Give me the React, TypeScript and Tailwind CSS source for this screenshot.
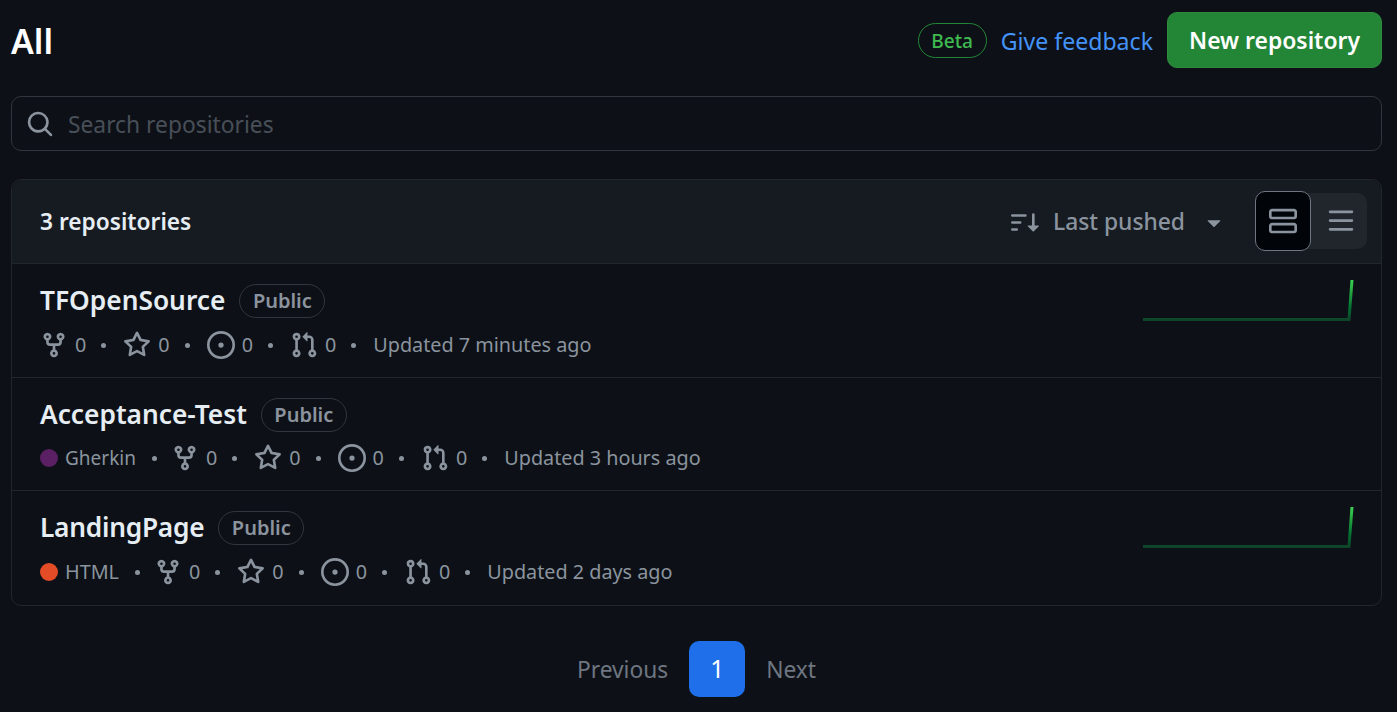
import React from 'react';

type IconProps = { d: string; className?: string };

const Icon: React.FC<IconProps> = ({ d, className }) => (
  <svg viewBox="0 0 16 16" fill="currentColor" className={className}>
    <path d={d} />
  </svg>
);

const FORK = 'M5 5.372v.878c0 .414.336.75.75.75h4.5a.75.75 0 0 0 .75-.75v-.878a2.25 2.25 0 1 1 1.5 0v.878a2.25 2.25 0 0 1-2.25 2.25h-1.5v2.128a2.251 2.251 0 1 1-1.5 0V8.5h-1.5A2.25 2.25 0 0 1 3.5 6.25v-.878a2.25 2.25 0 1 1 1.5 0ZM5 3.25a.75.75 0 1 0-1.5 0 .75.75 0 0 0 1.5 0Zm6.75.75a.75.75 0 1 0 0-1.5.75.75 0 0 0 0 1.5Zm-3 8.75a.75.75 0 1 0-1.5 0 .75.75 0 0 0 1.5 0Z';
const STAR = 'M8 .25a.75.75 0 0 1 .673.418l1.882 3.815 4.21.612a.75.75 0 0 1 .416 1.279l-3.046 2.97.719 4.192a.751.751 0 0 1-1.088.791L8 12.347l-3.766 1.98a.75.75 0 0 1-1.088-.79l.72-4.194L.818 6.374a.75.75 0 0 1 .416-1.28l4.21-.611L7.327.668A.75.75 0 0 1 8 .25Zm0 2.445L6.615 5.5a.75.75 0 0 1-.564.41l-3.097.45 2.24 2.184a.75.75 0 0 1 .216.664l-.528 3.084 2.769-1.456a.75.75 0 0 1 .698 0l2.77 1.456-.53-3.084a.75.75 0 0 1 .216-.664l2.24-2.183-3.096-.45a.75.75 0 0 1-.564-.41L8 2.694Z';
const ISSUE = 'M8 9.5a1.5 1.5 0 1 0 0-3 1.5 1.5 0 0 0 0 3ZM8 0a8 8 0 1 1 0 16A8 8 0 0 1 8 0ZM1.5 8a6.5 6.5 0 1 0 13 0 6.5 6.5 0 0 0-13 0Z';
const PULL = 'M1.5 3.25a2.25 2.25 0 1 1 3 2.122v5.256a2.251 2.251 0 1 1-1.5 0V5.372A2.25 2.25 0 0 1 1.5 3.25Zm5.677-.177L9.573.677A.25.25 0 0 1 10 .854V2.5h1A2.5 2.5 0 0 1 13.5 5v5.628a2.251 2.251 0 1 1-1.5 0V5a1 1 0 0 0-1-1h-1v1.646a.25.25 0 0 1-.427.177L7.177 3.427a.25.25 0 0 1 0-.354ZM3.75 2.5a.75.75 0 1 0 0 1.5.75.75 0 0 0 0-1.5Zm0 9.5a.75.75 0 1 0 0 1.5.75.75 0 0 0 0-1.5Zm8.25.75a.75.75 0 1 0 1.5 0 .75.75 0 0 0-1.5 0Z';
const SEARCH = 'M10.68 11.74a6 6 0 0 1-7.922-8.982 6 6 0 0 1 8.982 7.922l3.04 3.04a.749.749 0 0 1-.326 1.275.749.749 0 0 1-.734-.215ZM11.5 7a4.499 4.499 0 1 0-8.997 0A4.499 4.499 0 0 0 11.5 7Z';
const SORT = 'M0 4.25a.75.75 0 0 1 .75-.75h7.5a.75.75 0 0 1 0 1.5h-7.5A.75.75 0 0 1 0 4.25Zm0 4a.75.75 0 0 1 .75-.75h4.5a.75.75 0 0 1 0 1.5h-4.5A.75.75 0 0 1 0 8.25Zm0 4a.75.75 0 0 1 .75-.75h2.5a.75.75 0 0 1 0 1.5h-2.5a.75.75 0 0 1-.75-.75ZM13.5 10h2.25a.25.25 0 0 1 .177.427l-3 3a.25.25 0 0 1-.354 0l-3-3A.25.25 0 0 1 9.75 10H12V3.75a.75.75 0 0 1 1.5 0V10Z';
const ROWS = 'M16 10.75v2.5A1.75 1.75 0 0 1 14.25 15H1.75A1.75 1.75 0 0 1 0 13.25v-2.5C0 9.784.784 9 1.75 9h12.5c.966 0 1.75.784 1.75 1.75Zm0-8v2.5A1.75 1.75 0 0 1 14.25 7H1.75A1.75 1.75 0 0 1 0 5.25v-2.5C0 1.784.784 1 1.75 1h12.5c.966 0 1.75.784 1.75 1.75Zm-1.75-.25H1.75a.25.25 0 0 0-.25.25v2.5c0 .138.112.25.25.25h12.5a.25.25 0 0 0 .25-.25v-2.5a.25.25 0 0 0-.25-.25Zm0 8H1.75a.25.25 0 0 0-.25.25v2.5c0 .138.112.25.25.25h12.5a.25.25 0 0 0 .25-.25v-2.5a.25.25 0 0 0-.25-.25Z';
const BARS = 'M1 2.75A.75.75 0 0 1 1.75 2h12.5a.75.75 0 0 1 0 1.5H1.75A.75.75 0 0 1 1 2.75Zm0 5A.75.75 0 0 1 1.75 7h12.5a.75.75 0 0 1 0 1.5H1.75A.75.75 0 0 1 1 7.75ZM1.75 12h12.5a.75.75 0 0 1 0 1.5H1.75a.75.75 0 0 1 0-1.5Z';
const CARET = 'm4.427 7.427 3.396 3.396a.25.25 0 0 0 .354 0l3.396-3.396A.25.25 0 0 0 11.396 7H4.604a.25.25 0 0 0-.177.427Z';

const Dot = () => <span className="ml-[15px] mr-[17px] h-[5px] w-[5px] rounded-full bg-[#8b949e]" />;

const Stat: React.FC<{ d: string }> = ({ d }) => (
  <span className="flex items-center">
    <Icon d={d} className="h-[28px] w-[28px]" />
    <span className="ml-[7px]">0</span>
  </span>
);

const Sparkline: React.FC<{ id: string }> = ({ id }) => (
  <svg width="212" height="44" viewBox="0 0 212 44" fill="none" className="shrink-0">
    <defs>
      <linearGradient id={id} gradientUnits="userSpaceOnUse" x1="0" y1="42" x2="0" y2="2">
        <stop offset="0" stopColor="#0e4429" />
        <stop offset="0.3" stopColor="#006d32" />
        <stop offset="0.7" stopColor="#26a641" />
        <stop offset="1" stopColor="#39d353" />
      </linearGradient>
    </defs>
    <path d="M1 41.5 L207 41.5 L210 2" stroke={`url(#${id})`} strokeWidth="3" />
  </svg>
);

type Repo = {
  name: string;
  nameClass: string;
  lang?: { label: string; color: string; labelClass: string };
  updated: string;
  spark?: boolean;
  rowClass: string;
  metaClass: string;
};

const repos: Repo[] = [
  { name: 'TFOpenSource', nameClass: '', updated: 'Updated 7 minutes ago', spark: true, rowClass: 'h-[114px]', metaClass: 'mt-[10px]' },
  { name: 'Acceptance-Test', nameClass: '', lang: { label: 'Gherkin', color: 'bg-[#5b2063]', labelClass: 'text-[19px]' }, updated: 'Updated 3 hours ago', rowClass: 'h-[113px]', metaClass: 'mt-[9px]' },
  { name: 'LandingPage', nameClass: 'tracking-[-0.25px]', lang: { label: 'HTML', color: 'bg-[#e34c26]', labelClass: '' }, updated: 'Updated 2 days ago', spark: true, rowClass: 'h-[115px]', metaClass: 'mt-[10px]' },
];

const RepoRow: React.FC<{ repo: Repo; index: number }> = ({ repo, index }) => (
  <div className={`${repo.rowClass} flex items-start justify-between border-t border-[#21262d] pl-[28px] pr-[27px]`}>
    <div className="flex flex-col">
      <div className="mt-[20px] flex h-[34px] items-center">
        <span className={`text-[26.3px] font-semibold text-[#e6edf3] ${repo.nameClass}`}>{repo.name}</span>
        <span className="ml-[14px] flex h-[34px] items-center rounded-full border border-[#30363d] px-[12.5px] text-[20px] font-semibold text-[#8b949e]">Public</span>
      </div>
      <div className={`${repo.metaClass} flex h-[34px] items-center text-[19.8px] text-[#8b949e]`}>
        {repo.lang && (
          <>
            <span className={`mr-[7px] h-[18px] w-[18px] rounded-full ${repo.lang.color}`} />
            <span className={repo.lang.labelClass}>{repo.lang.label}</span>
            <span className="ml-[16px] mr-[14px] h-[5px] w-[5px] rounded-full bg-[#8b949e]" />
          </>
        )}
        <Stat d={FORK} />
        <Dot />
        <Stat d={STAR} />
        <Dot />
        <Stat d={ISSUE} />
        <Dot />
        <Stat d={PULL} />
        <Dot />
        <span>{repo.updated}</span>
      </div>
    </div>
    {repo.spark && (
      <div className="mt-[14px]">
        <Sparkline id={`spark-${index}`} />
      </div>
    )}
  </div>
);

const App: React.FC = () => {
  return (
    <div className="h-[712px] overflow-hidden bg-[#0d1117] pl-[11px] pr-[15px] pt-[12px] font-['Noto_Sans',sans-serif]">
      {/* title row */}
      <div className="flex h-[56px] items-center justify-between">
        <h1 className="pt-[3px] text-[34px] font-semibold text-white">All</h1>
        <div className="flex items-center">
          <span className="flex h-[35px] w-[69px] items-center justify-center rounded-full border border-[#238636] pt-[2px] text-[19.1px] font-medium text-[#3fb950]">Beta</span>
          <span className="ml-[14px] pt-[2px] text-[23.1px] text-[#4493f8]">Give feedback</span>
          <button className="ml-[14px] flex h-[56px] w-[215px] items-center justify-center rounded-[10px] border border-[#2f8a3e] bg-[#238636] pt-[3px] text-[22.9px] font-semibold text-white">New repository</button>
        </div>
      </div>

      {/* search */}
      <div className="mt-[28px] flex h-[55px] items-center rounded-[10px] border border-[#30363d] pl-[14px]">
        <Icon d={SEARCH} className="h-[28px] w-[28px] text-[#8b949e]" />
        <span className="ml-[14px] pt-[3px] text-[22.8px] text-[#484f58]">Search repositories</span>
      </div>

      {/* list */}
      <div className="mt-[28px] rounded-[10px] border border-[#21262d]">
        <div className="flex h-[83px] items-center justify-between rounded-t-[10px] bg-[#161b22] pl-[28px] pr-[14px]">
          <span className="pt-[2px] text-[22.7px] font-semibold text-[#e6edf3]">3 repositories</span>
          <div className="flex items-center">
            <div className="flex items-center text-[#8b949e]">
              <Icon d={SORT} className="h-[28px] w-[28px]" />
              <span className="ml-[14px] pt-[2px] text-[22.8px] font-medium">Last pushed</span>
              <Icon d={CARET} className="ml-[15px] h-[28px] w-[28px]" />
            </div>
            <div className="-mt-[2px] ml-[27px] flex h-[56px] w-[112px] items-center rounded-[10px] bg-[#21262d]">
              <span className="flex h-[60px] w-[56px] items-center justify-center rounded-[10px] border border-[#6e7681] bg-[#010409] text-[#8b949e]">
                <Icon d={ROWS} className="h-[28px] w-[28px]" />
              </span>
              <span className="flex h-[56px] w-[56px] items-center justify-center pl-[4px] text-[#8b949e]">
                <Icon d={BARS} className="h-[28px] w-[28px]" />
              </span>
            </div>
          </div>
        </div>
        {repos.map((repo, i) => (
          <RepoRow key={repo.name} repo={repo} index={i} />
        ))}
      </div>

      {/* pagination */}
      <div className="mt-[35px] flex items-center justify-center">
        <span className="pt-[3px] text-[22.75px] text-[#6e7681]">Previous</span>
        <span className="ml-[21px] flex h-[56px] w-[56px] items-center justify-center rounded-[10px] bg-[#1f6feb] text-[24.5px] text-white">1</span>
        <span className="ml-[21px] pt-[3px] text-[22.75px] text-[#6e7681]">Next</span>
      </div>
    </div>
  );
};

export default App;
